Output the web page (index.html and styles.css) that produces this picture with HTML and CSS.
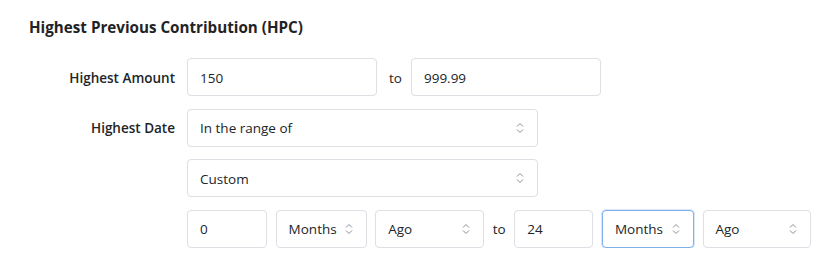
FILE: index.html
```html
<!DOCTYPE html>
<html lang="en">
<head>
<meta charset="utf-8">
<title>HPC</title>
<link rel="stylesheet" href="styles.css">
</head>
<body>
<section class="panel">
  <h2 class="title">Highest Previous Contribution (HPC)</h2>
  <div class="form">
    <div class="row">
      <label class="label">Highest Amount</label>
      <div class="controls">
        <div class="field w190">150</div>
        <span class="to to-wide">to</span>
        <div class="field w190">999.99</div>
      </div>
    </div>
    <div class="row">
      <label class="label">Highest Date</label>
      <div class="controls">
        <div class="field select w351"><span>In the range of</span><svg class="chev" viewBox="0 0 8 12" width="8" height="12"><path d="M1 4.5 4 1.5 7 4.5M1 7.5 4 10.5 7 7.5"/></svg></div>
      </div>
    </div>
    <div class="row">
      <span class="label"></span>
      <div class="controls">
        <div class="field select w351"><span>Custom</span><svg class="chev" viewBox="0 0 8 12" width="8" height="12"><path d="M1 4.5 4 1.5 7 4.5M1 7.5 4 10.5 7 7.5"/></svg></div>
      </div>
    </div>
    <div class="row">
      <span class="label"></span>
      <div class="controls gap9">
        <div class="field w80">0</div>
        <div class="field select w91"><span>Months</span><svg class="chev" viewBox="0 0 8 12" width="8" height="12"><path d="M1 4.5 4 1.5 7 4.5M1 7.5 4 10.5 7 7.5"/></svg></div>
        <div class="field select w109"><span>Ago</span><svg class="chev" viewBox="0 0 8 12" width="8" height="12"><path d="M1 4.5 4 1.5 7 4.5M1 7.5 4 10.5 7 7.5"/></svg></div>
        <span class="to">to</span>
        <div class="field w79">24</div>
        <div class="field select w92 focus"><span>Months</span><svg class="chev" viewBox="0 0 8 12" width="8" height="12"><path d="M1 4.5 4 1.5 7 4.5M1 7.5 4 10.5 7 7.5"/></svg></div>
        <div class="field select w108"><span>Ago</span><svg class="chev" viewBox="0 0 8 12" width="8" height="12"><path d="M1 4.5 4 1.5 7 4.5M1 7.5 4 10.5 7 7.5"/></svg></div>
      </div>
    </div>
  </div>
</section>
</body>
</html>
```

FILE: styles.css
```css
* { box-sizing: border-box; }
html, body { margin: 0; padding: 0; background: #fff; }
body {
  font-family: "Open Sans", "Noto Sans", "Liberation Sans", sans-serif;
  color: #212529;
  font-size: 13.5px;
}
.panel { padding: 16px 0 0 29px; }
.title {
  margin: 0;
  font-size: 15.2px;
  font-weight: 700;
  line-height: 22px;
  color: #1f2326;
}
.form {
  margin-top: 20px;
  display: flex;
  flex-direction: column;
  gap: 12.5px;
}
.row {
  display: flex;
  align-items: center;
}
.label {
  width: 146px;
  text-align: right;
  font-weight: 600;
  margin-right: 12px;
  flex: none;
  padding-top: 1px;
}
.controls {
  display: flex;
  align-items: center;
}
.gap9 { gap: 8.6px; }
.field {
  height: 38px;
  border: 1px solid #dcdfe3;
  border-radius: 4px;
  padding: 1px 12px 0;
  display: flex;
  align-items: center;
  background: #fff;
  flex: none;
}
.select { justify-content: space-between; padding-right: 13px; }
.chev { fill: none; stroke: #8a8f94; stroke-width: 1; margin-top: -1px; }
.focus { border-color: #7fb0e8; box-shadow: 0 0 0 1px rgba(127,176,232,0.3); }
.to { flex: none; padding-top: 1px; }
.to-wide { margin: 0 9px 0 12px; }
.w190 { width: 190px; }
.w351 { width: 351px; }
.w80 { width: 80px; }
.w91 { width: 91px; }
.w109 { width: 109px; }
.w79 { width: 79px; }
.w92 { width: 92px; }
.w108 { width: 108px; }
```
